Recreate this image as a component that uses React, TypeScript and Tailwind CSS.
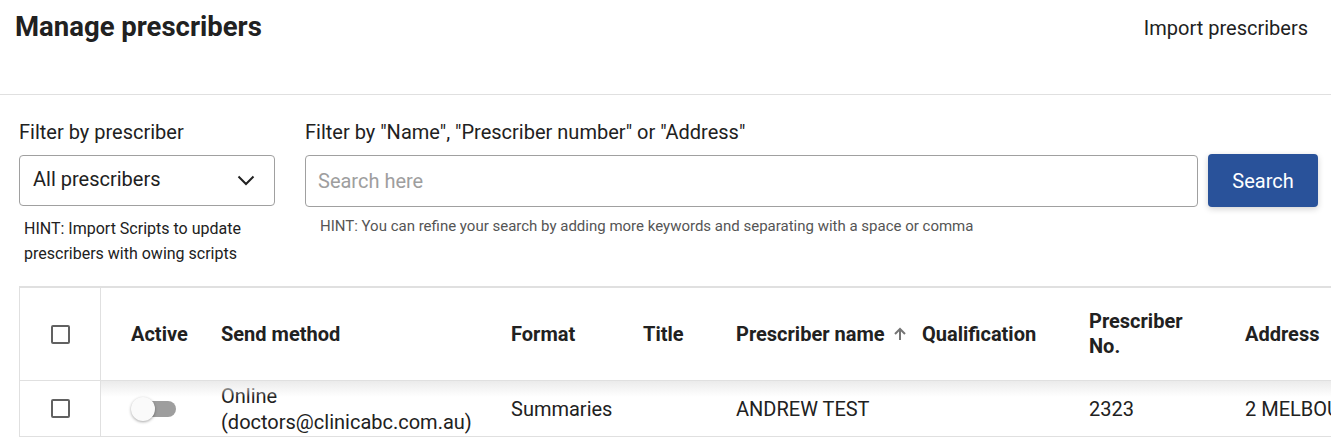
import React from "react";

function Checkbox() {
  return <div className="w-[19px] h-[19px] border-2 border-[#616161] rounded-[2px] bg-white" />;
}

function Toggle() {
  return (
    <div className="relative w-[46px] h-[24px] flex items-center">
      <div className="absolute left-[7px] w-[38px] h-[16px] rounded-full bg-[#9e9e9e]" />
      <div className="absolute left-0 w-[24px] h-[24px] rounded-full bg-[#fafafa] shadow-[0_1px_3px_rgba(0,0,0,0.35)]" />
    </div>
  );
}

const cols =
  "grid grid-cols-[81px_120px_290px_132px_93px_186px_167px_156px_300px]";

export default function App() {
  return (
    <div className="font-['Roboto',sans-serif] text-[#212121] w-[1331px] h-[440px] overflow-hidden bg-white">
      {/* page header */}
      <div className="flex justify-between items-start h-[95px] border-b border-[#e0e0e0] pl-[15px] pr-[23px] pt-[10px]">
        <h1 className="text-[27.5px] font-bold leading-[34px]">Manage prescribers</h1>
        <button className="text-[20px] leading-[34px] mt-[1px]">Import prescribers</button>
      </div>

      {/* filters */}
      <div className="h-[191px] pt-[25px] pl-[19px] flex items-start">
        <div className="w-[256px] flex flex-col">
          <label className="text-[20px] leading-[24px] mb-[11px]">Filter by prescriber</label>
          <div className="h-[51px] border border-[#a0a0a0] rounded-[4px] flex items-center justify-between pl-[13px] pr-[19px]">
            <span className="text-[20px] mb-[3px]">All prescribers</span>
            <svg width="18" height="11" viewBox="0 0 18 11" fill="none">
              <polyline points="1.5,1.5 9,9 16.5,1.5" stroke="#212121" strokeWidth="2" />
            </svg>
          </div>
          <p className="mt-[10px] pl-[5px] text-[16px] leading-[25px]">
            HINT: Import Scripts to update
            <br />
            prescribers with owing scripts
          </p>
        </div>
        <div className="ml-[30px] w-[1013px] flex flex-col">
          <label className="text-[20px] leading-[24px] mb-[11px]">
            Filter by "Name", "Prescriber number" or "Address"
          </label>
          <div className="flex items-start">
            <input
              placeholder="Search here"
              className="w-[893px] h-[52px] border border-[#a0a0a0] rounded-[4px] pl-[12px] text-[20px] placeholder:text-[#9e9e9e] outline-none"
            />
            <button className="ml-[10px] -mt-[1px] w-[110px] h-[53px] rounded-[4px] bg-[#29529a] text-white text-[20px] shadow-[0_2px_6px_rgba(0,0,0,0.18)]">
              Search
            </button>
          </div>
          <p className="mt-[9px] pl-[15px] text-[15px] leading-[20px] text-[#555555]">
            HINT: You can refine your search by adding more keywords and separating with a space or comma
          </p>
        </div>
      </div>

      {/* prescribers table */}
      <div className="ml-[19px] border-t-2 border-l border-[#e0e0e0] w-[1600px]">
        <div className={`${cols} h-[93px] border-b border-[#e0e0e0] items-center text-[20px] font-bold`}>
          <div className="h-full border-r border-[#e0e0e0] flex items-center justify-center">
            <Checkbox />
          </div>
          <div className="pl-[30px]">Active</div>
          <div>Send method</div>
          <div>Format</div>
          <div>Title</div>
          <div className="flex items-center">
            Prescriber name
            <svg className="ml-[8px]" width="14" height="14" viewBox="0 0 14 14" fill="none">
              <path d="M7 13V2M2 7l5-5 5 5" stroke="#757575" strokeWidth="2" />
            </svg>
          </div>
          <div>Qualification</div>
          <div className="leading-[25px]">
            Prescriber
            <br />
            No.
          </div>
          <div>Address</div>
        </div>
        <div className={`${cols} relative h-[56px] border-b border-[#e0e0e0] items-center text-[20px]`}>
          <div className="absolute left-[81px] right-0 top-0 h-[16px] bg-gradient-to-b from-[#ebebeb] to-transparent pointer-events-none" />
          <div className="h-full border-r border-[#e0e0e0] flex items-center justify-center">
            <Checkbox />
          </div>
          <div className="pl-[30px]">
            <Toggle />
          </div>
          <div className="leading-[26px]">
            Online
            <br />
            (doctors@clinicabc.com.au)
          </div>
          <div>Summaries</div>
          <div></div>
          <div>ANDREW TEST</div>
          <div></div>
          <div>2323</div>
          <div className="whitespace-nowrap">2 MELBOURNE STREET</div>
        </div>
      </div>
    </div>
  );
}
